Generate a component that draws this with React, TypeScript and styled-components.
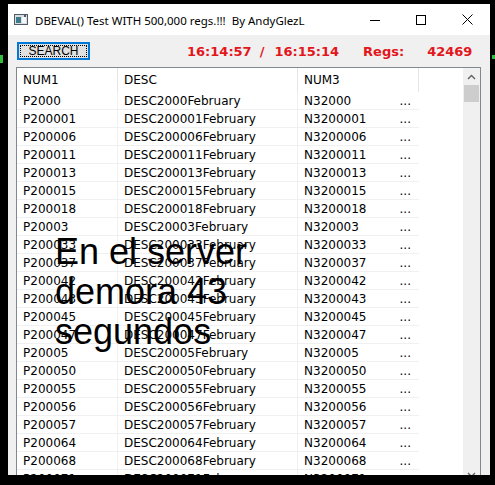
import React from "react";
import styled, { createGlobalStyle } from "styled-components";

const GlobalStyle = createGlobalStyle`
  html, body {
    margin: 0;
    padding: 0;
    background: #000;
    width: 495px;
    height: 485px;
    overflow: hidden;
  }
  #root {
    position: relative;
    width: 495px;
    height: 485px;
    padding: 4px 0 0 8px;
    box-sizing: border-box;
  }
`;

const DesktopMark = styled.span<{ $side: "left" | "right" }>`
  position: absolute;
  top: 55px;
  ${(p) => (p.$side === "left" ? "left: 0;" : "right: 0;")}
  width: 3px;
  height: ${(p) => (p.$side === "left" ? "8px" : "4px")};
  background: #2fbf3a;
`;

const Window = styled.div`
  position: relative;
  width: 482px;
  height: 471px;
  background: #f0f0f0;
  overflow: hidden;
  display: flex;
  flex-direction: column;
`;

const TitleBar = styled.div`
  height: 31px;
  flex-shrink: 0;
  background: #fff;
  display: flex;
  align-items: center;
  font-family: "Noto Sans", "Liberation Sans", sans-serif;
  font-size: 11.5px;
  color: #000;
`;

const AppIcon = styled.svg`
  margin: 0 7px 0 6px;
  flex-shrink: 0;
`;

const Title = styled.div`
  flex: 1;
  white-space: pre;
  padding-top: 1px;
`;

const CaptionButton = styled.div`
  width: 46px;
  height: 31px;
  display: flex;
  align-items: center;
  justify-content: center;
`;

const Client = styled.div`
  flex: 1;
  display: flex;
  flex-direction: column;
  padding-top: 7px;
`;

const Toolbar = styled.div`
  height: 18px;
  display: flex;
  align-items: center;
  padding-left: 9px;
`;

const SearchButton = styled.button`
  position: relative;
  width: 73px;
  height: 18px;
  padding: 0;
  border: 1px solid #0078d7;
  box-shadow: inset 0 0 0 1px #0078d7;
  background: #e1e1e1;
  font-family: "Liberation Sans", Arial, sans-serif;
  font-size: 12px;
  color: #000;
  line-height: 16px;
  &::after {
    content: "";
    position: absolute;
    inset: 2px;
    border: 1px dotted #000;
  }
`;

const Status = styled.span<{ $gap: number }>`
  margin-left: ${(p) => p.$gap}px;
  font-family: "DejaVu Sans", Verdana, sans-serif;
  font-weight: bold;
  font-size: 13px;
  color: #e3161c;
  white-space: pre;
`;

const Grid = styled.div`
  margin: 7px 0 0 8px;
  width: 465px;
  height: 417px;
  box-sizing: border-box;
  border: 1px solid #828790;
  background: #fff;
  display: flex;
  flex-shrink: 0;
`;

const Body = styled.div`
  flex: 1;
  overflow: hidden;
  font-family: "DejaVu Sans", Verdana, sans-serif;
  font-size: 12px;
  color: #000;
`;

const HeaderRow = styled.div`
  height: 24px;
  display: flex;
`;

const Row = styled.div`
  height: 18px;
  display: flex;
`;

const HeadCell = styled.div<{ $w: number }>`
  width: ${(p) => p.$w}px;
  box-sizing: border-box;
  border-right: 1px solid #e5e5e5;
  padding-left: 6px;
  display: flex;
  align-items: center;
`;

const Cell = styled.div<{ $w: number; $last?: boolean }>`
  width: ${(p) => p.$w}px;
  box-sizing: border-box;
  border-bottom: 1px solid #f0f0f0;
  border-right: ${(p) => (p.$last ? "none" : "1px solid #f0f0f0")};
  padding: 1px 8px 0 6px;
  display: flex;
  align-items: center;
  white-space: nowrap;
  overflow: hidden;
`;

const More = styled.span`
  margin-left: auto;
`;

const ScrollBar = styled.div`
  width: 17px;
  flex-shrink: 0;
  background: #f0f0f0;
  display: flex;
  flex-direction: column;
`;

const ArrowBox = styled.div`
  height: 17px;
  display: flex;
  align-items: center;
  justify-content: center;
`;

const Thumb = styled.div`
  height: 17px;
  margin: 0 1px;
  background: #cdcdcd;
`;

const Filler = styled.div`
  flex: 1;
`;

const Overlay = styled.div`
  position: absolute;
  left: 47px;
  top: 228px;
  font-family: "Liberation Sans", Arial, sans-serif;
  font-size: 36px;
  line-height: 40px;
  color: #000;
  pointer-events: none;
`;

const ids = [
  "2000", "200001", "200006", "200011", "200013", "200015", "200018",
  "20003", "200033", "200037", "200042", "200043", "200045", "200047",
  "20005", "200050", "200055", "200056", "200057", "200064", "200068",
  "200071",
];

const Chevron = ({ up }: { up: boolean }) => (
  <svg width="9" height="6" viewBox="0 0 9 6">
    <path
      d={up ? "M1 5 L4.5 1.5 L8 5" : "M1 1 L4.5 4.5 L8 1"}
      fill="none"
      stroke="#606060"
      strokeWidth="1.4"
    />
  </svg>
);

export default function App() {
  return (
    <>
      <GlobalStyle />
      <DesktopMark $side="left" />
      <DesktopMark $side="right" />
      <Window>
        <TitleBar>
          <AppIcon width="14" height="11" viewBox="0 0 14 11">
            <rect x="0.5" y="0.5" width="13" height="10" fill="#d9dde0" stroke="#4f5b66" />
            <rect x="2" y="3" width="5" height="6" fill="#3c7a8c" />
            <rect x="8" y="3" width="4" height="6" fill="#f4f6f7" />
            <rect x="10" y="1" width="2" height="2" fill="#4f5b66" />
          </AppIcon>
          <Title>{"DBEVAL() Test WITH 500,000 regs.!!!  By AndyGlezL"}</Title>
          <CaptionButton>
            <svg width="10" height="10" viewBox="0 0 10 10">
              <path d="M0 5.5 H10" stroke="#000" strokeWidth="1" />
            </svg>
          </CaptionButton>
          <CaptionButton>
            <svg width="10" height="10" viewBox="0 0 10 10">
              <rect x="0.5" y="0.5" width="9" height="9" fill="none" stroke="#000" />
            </svg>
          </CaptionButton>
          <CaptionButton>
            <svg width="11" height="11" viewBox="0 0 11 11">
              <path d="M0.5 0.5 L10.5 10.5 M10.5 0.5 L0.5 10.5" stroke="#000" strokeWidth="1" />
            </svg>
          </CaptionButton>
        </TitleBar>
        <Client>
          <Toolbar>
            <SearchButton>SEARCH</SearchButton>
            <Status $gap={97}>16:14:57</Status>
            <Status $gap={8}>/</Status>
            <Status $gap={10}>16:15:14</Status>
            <Status $gap={24}>Regs:</Status>
            <Status $gap={23}>42469</Status>
          </Toolbar>
          <Grid>
            <Body>
              <HeaderRow>
                <HeadCell $w={101}>NUM1</HeadCell>
                <HeadCell $w={180}>DESC</HeadCell>
                <HeadCell $w={121}>NUM3</HeadCell>
              </HeaderRow>
              {ids.map((id) => (
                <Row key={id}>
                  <Cell $w={101}>P{id}</Cell>
                  <Cell $w={180}>DESC{id}February</Cell>
                  <Cell $w={121} $last>
                    N3{id}
                    <More>...</More>
                  </Cell>
                </Row>
              ))}
            </Body>
            <ScrollBar>
              <ArrowBox>
                <Chevron up />
              </ArrowBox>
              <Thumb />
              <Filler />
              <ArrowBox>
                <Chevron up={false} />
              </ArrowBox>
            </ScrollBar>
          </Grid>
        </Client>
        <Overlay>
          En el server
          <br />
          demora 43
          <br />
          segundos
        </Overlay>
      </Window>
    </>
  );
}
